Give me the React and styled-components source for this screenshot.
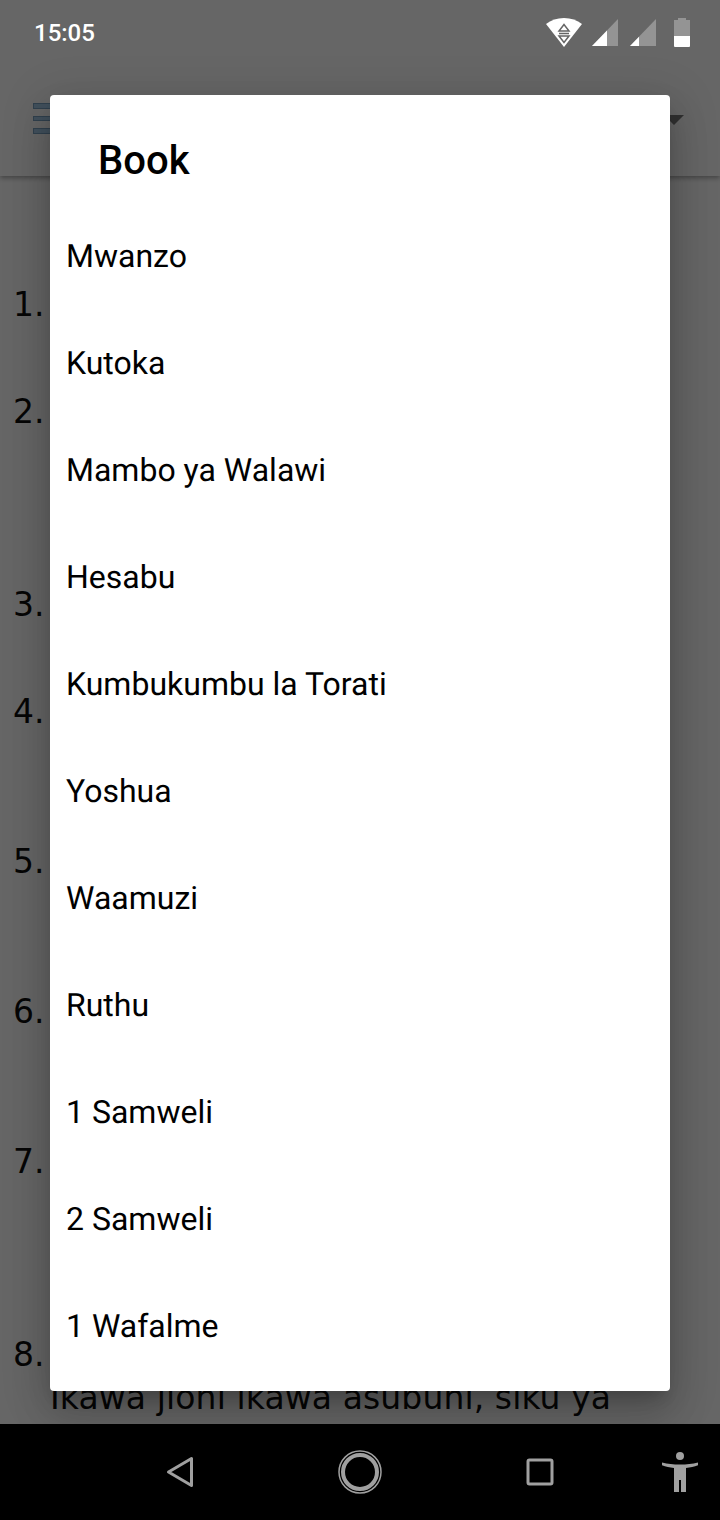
import React from "react";
import styled, { createGlobalStyle } from "styled-components";

const Global = createGlobalStyle`
  html, body { margin: 0; padding: 0; background: #fff; }
  * { box-sizing: border-box; }
`;
const Screen = styled.div`
  position: relative; width: 720px; height: 1520px; overflow: hidden;
  display: flex; flex-direction: column; background: #fff;
`;
const Top = styled.div`
  height: 176px; flex: none; display: flex; flex-direction: column;
  box-shadow: 0 2px 5px rgba(0,0,0,.35);
`;
const StatusBar = styled.div`
  position: absolute; top: 0; left: 0; right: 0; z-index: 3; height: 64px;
  padding: 1px 30px 0 34px; display: flex; align-items: center; justify-content: space-between;
  color: #fff; font: 500 24px/1 Roboto, sans-serif;
`;
const StatusIcons = styled.div` display: flex; align-items: flex-start; margin-top: -1px; `;
const Toolbar = styled.div`
  margin-top: 64px; flex: 1; padding: 39px 36px 0 33px;
  display: flex; justify-content: space-between; align-items: flex-start;
`;
const Burger = styled.div` width: 30px; display: flex; flex-direction: column; gap: 7px; `;
const BurgerBar = styled.div` height: 5.5px; background: #a6cbe8; border: 1px solid #7ba2c2; `;
const Caret = styled.div`
  margin-top: 12px; width: 0; height: 0;
  border-left: 10px solid transparent; border-right: 10px solid transparent; border-top: 10px solid #7a7a7a;
`;
const Verses = styled.div`
  flex: 1; padding: 107px 0 0 13px; overflow: hidden;
  color: #111; font: 400 33px/43px "DejaVu Sans", sans-serif;
`;
const Verse = styled.div`
  display: flex; min-height: ${p => p.$lines * 43}px; margin-bottom: 21px;
`;
const Num = styled.div` width: 37px; flex: none; `;
const VerseText = styled.div` white-space: pre-line; letter-spacing: .1px; `;
const Nav = styled.div`
  height: 96px; flex: none; background: #000; position: relative; z-index: 3;
  padding-left: 90px;
  display: grid; grid-template-columns: 180px 180px 180px 100px; justify-items: center; align-items: center;
`;
const Scrim = styled.div`
  position: absolute; inset: 0 0 96px 0; z-index: 2; background: rgba(0,0,0,.6);
  padding: 95px 50px 33px;
`;
const Dialog = styled.div`
  background: #fff; height: 1296px; border-radius: 4px; overflow: hidden;
  box-shadow: 0 11px 15px -7px rgba(0,0,0,.2), 0 24px 38px 3px rgba(0,0,0,.14), 0 9px 46px 8px rgba(0,0,0,.12);
`;
const Title = styled.div`
  height: 107px; padding: 42px 0 0 48px; color: #000;
  font: 500 40px/48px Roboto, sans-serif;
`;
const Item = styled.div`
  height: 107px; padding: 0 16px; display: flex; align-items: center; color: #000;
  font: 400 32px/1 Roboto, sans-serif; text-rendering: geometricPrecision;
`;

const books = ["Mwanzo","Kutoka","Mambo ya Walawi","Hesabu","Kumbukumbu la Torati","Yoshua","Waamuzi","Ruthu","1 Samweli","2 Samweli","1 Wafalme"];
const verseLines = [2,4,2,3,3,3,4];

const Wifi = () => (
  <svg width="36" height="29" viewBox="0 0 36 29">
    <path d="M0 6C5 2 11 0 18 0s13 2 18 6L18 29z" fill="#fff"/>
    <path d="M18 6.500l-5 6.500h10zM18 24.500l-5-6.500h10z" fill="none" stroke="#666" strokeWidth="1.500"/>
    <path d="M13 15.500h10" stroke="#666" strokeWidth="1.500"/>
  </svg>
);
const Signal = ({ fill, ml }) => (
  <svg width="26" height="28" viewBox="0 0 26 28" style={{ marginLeft: ml, marginTop: 1 }}>
    <path d="M0 27L26 0v27z" fill="#fff" fillOpacity=".3"/>
    <path d={`M0 27L${fill} ${27 - fill * 27 / 26}V27z`} fill="#fff"/>
  </svg>
);
const Battery = () => (
  <svg width="16" height="29" viewBox="0 0 16 29" style={{ marginLeft: 18 }}>
    <path d="M0 2h4V0h8v2h4v18H0z" fill="#fff" fillOpacity=".3"/>
    <path d="M0 18h16v10a1 1 0 0 1-1 1H1a1 1 0 0 1-1-1z" fill="#fff"/>
  </svg>
);

export default function App() {
  return (
    <Screen>
      <Global />
      <StatusBar>
        <span>15:05</span>
        <StatusIcons>
          <Wifi />
          <Signal fill={15} ml={10} />
          <Signal fill={9} ml={12} />
          <Battery />
        </StatusIcons>
      </StatusBar>
      <Top>
        <Toolbar>
          <Burger><BurgerBar /><BurgerBar /><BurgerBar /></Burger>
          <Caret />
        </Toolbar>
      </Top>
      <Verses>
        {verseLines.map((n, i) => (
          <Verse key={i} $lines={n}><Num>{i + 1}.</Num></Verse>
        ))}
        <Verse $lines={2}>
          <Num>8.</Num>
          <VerseText>{"\nIkawa jioni ikawa asubuni, siku ya"}</VerseText>
        </Verse>
      </Verses>
      <Nav>
        <svg width="28" height="32" viewBox="0 0 28 32"><path d="M25.500 2.500v27L2.500 16z" fill="none" stroke="#a0a0a0" strokeWidth="3" strokeLinejoin="round"/></svg>
        <svg width="44" height="44" viewBox="0 0 44 44"><circle cx="22" cy="22" r="21" fill="none" stroke="#a0a0a0" strokeWidth="1.500"/><circle cx="22" cy="22" r="17" fill="none" stroke="#a0a0a0" strokeWidth="4"/></svg>
        <svg width="28" height="28" viewBox="0 0 28 28"><rect x="2" y="2" width="24" height="24" rx="1.500" fill="none" stroke="#a0a0a0" strokeWidth="3"/></svg>
        <svg width="36" height="40" viewBox="0 0 36 40"><circle cx="18" cy="4" r="4" fill="#a0a0a0"/><path d="M0 10.500C6 12 11 12.500 18 12.500s12-.5 18-2l.5 2.500c-4 1.500-8 2.500-12.500 3V40h-5V28h-2v12h-5V16c-4.500-.5-8.500-1.500-12.500-3z" fill="#a0a0a0"/></svg>
      </Nav>
      <Scrim>
        <Dialog>
          <Title>Book</Title>
          {books.map(b => <Item key={b}>{b}</Item>)}
        </Dialog>
      </Scrim>
    </Screen>
  );
}
